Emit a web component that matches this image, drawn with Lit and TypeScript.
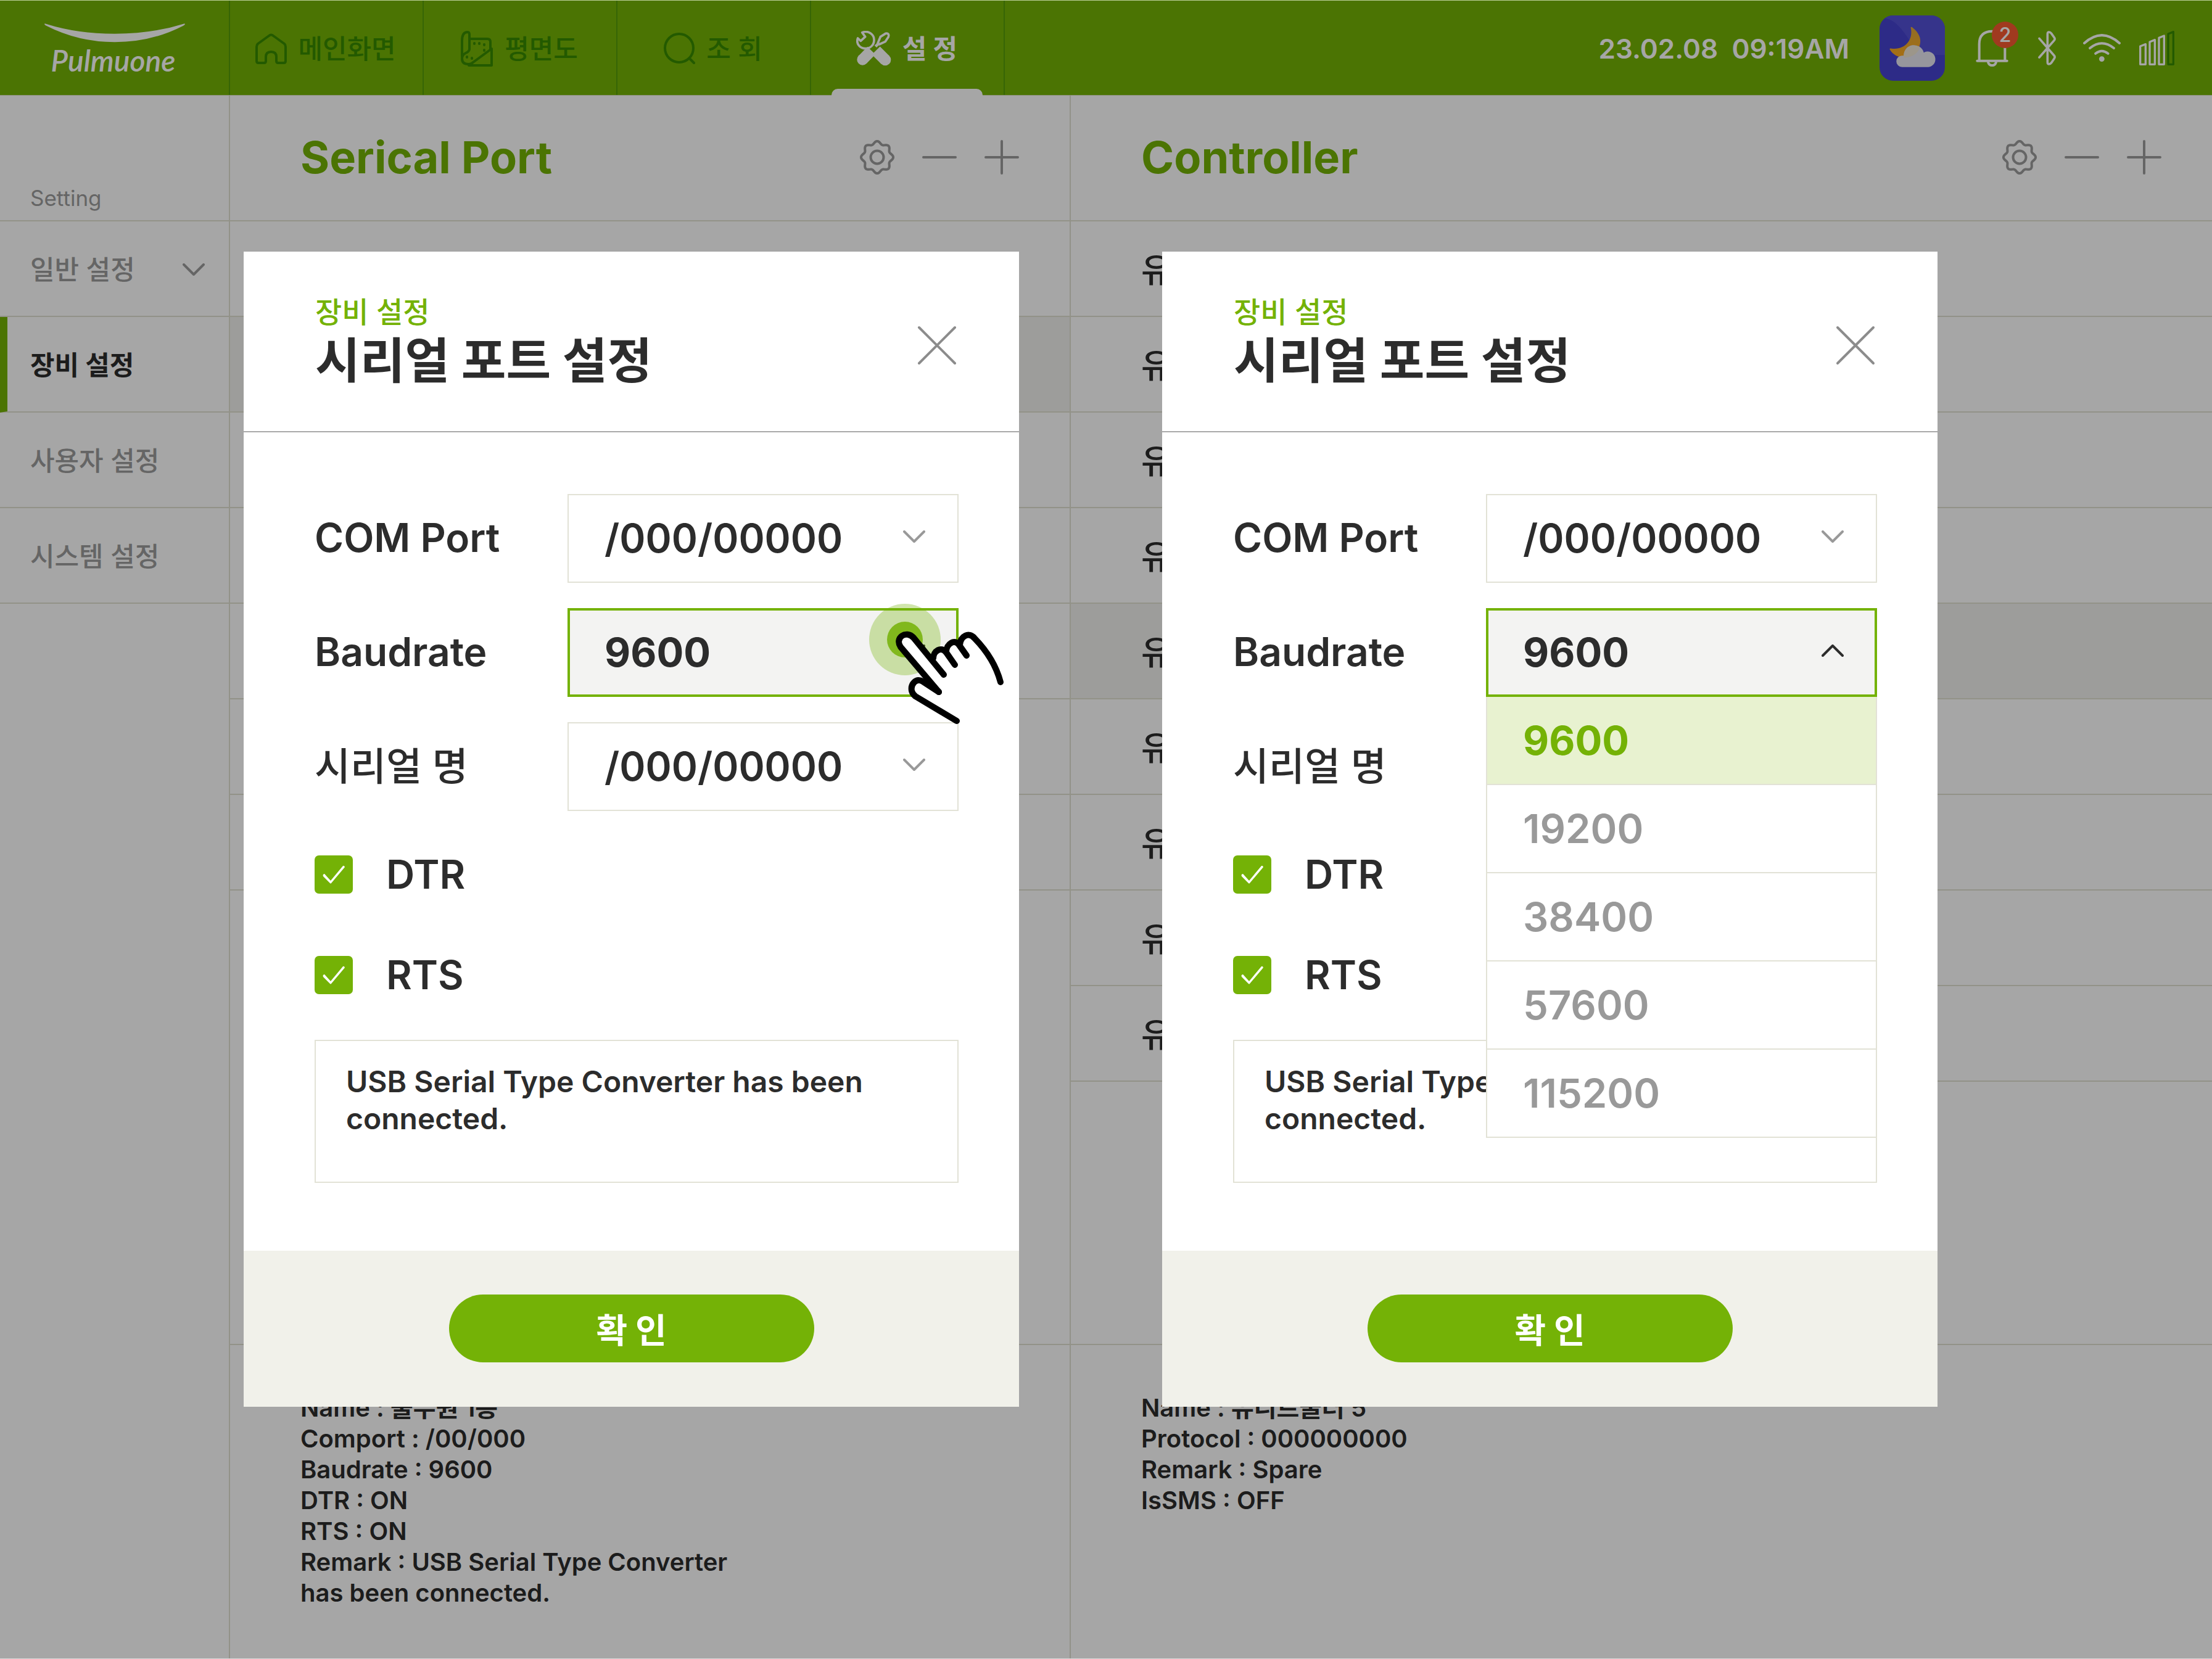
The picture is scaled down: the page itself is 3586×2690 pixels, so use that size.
import { LitElement, html, svg, css } from "lit";
import { customElement, property } from "lit/decorators.js";
import { classMap } from "lit/directives/class-map.js";

/* ---------- icons ---------- */

const homeIcon = html`<svg class="icon" width="51" height="50" viewBox="0 0 51 50" fill="none" stroke="currentColor" stroke-width="4" stroke-linejoin="round" aria-hidden="true">
  <path d="M5 48 Q2 48 2 45 V22 Q2 19 4 17 L22 4 Q25.500 1 29 4 L47 17 Q49 19 49 22 V45 Q49 48 46 48 H37 Q34 48 34 45 V38 Q34 30 25.500 30 Q17 30 17 38 V45 Q17 48 14 48 Z"/>
</svg>`;

const planIcon = html`<svg class="icon" width="53" height="58" viewBox="0 0 53 58" fill="none" stroke="currentColor" stroke-width="4" stroke-linejoin="round" stroke-linecap="round" aria-hidden="true">
  <path d="M2 42 V16 Q2 2 11 2 Q14 2 14 6 V30 Q13 34 8 36 Q2 39 2 45 Q2 54 12 54 Q17 54 20 51 L50 29 V56 H13"/>
  <path d="M14 13 H43 Q48 13 48 18 V29"/>
  <path d="M22 20v1M30 20v1M38 22v1M38 31v1M10 42v1M18 44v1"/>
</svg>`;

const searchIcon = html`<svg class="icon" width="51" height="51" viewBox="0 0 51 51" fill="none" stroke="currentColor" stroke-width="4" stroke-linecap="round" aria-hidden="true">
  <circle cx="25" cy="25" r="23"/><path d="M42 42 L49 49"/>
</svg>`;

const toolsIcon = html`<svg class="icon" width="57" height="57" viewBox="0 0 171 171" fill="none" stroke="currentColor" stroke-width="11" stroke-linejoin="round" aria-hidden="true">
  <path d="M29 8 C60 -4 88 18 87 46 C86 70 68 86 46 86 C18 86 -2 62 8 36 L22 49 L44 29 Z"/>
  <path d="M105 60 L118 29 L143 13 Q152 10 157 17 Q160 22 157 29 L142 52 L112 66 Z"/>
  <path d="M112 58 L94 76" stroke-width="14"/>
  <path d="M31 140 L74 96" stroke-width="54"/><circle cx="31" cy="140" r="27" fill="currentColor" stroke="none"/>
  <path d="M141 141 L96 96" stroke-width="56"/><circle cx="141" cy="141" r="28" fill="currentColor" stroke="none"/>
  <path d="M85 73 L97 85 L85 97 L73 85 Z" class="knock" stroke="none"/>
</svg>`;

const gearOutline = (() => {
  const points: string[] = [];
  for (let i = 0; i < 96; i++) {
    const a = (i / 96) * Math.PI * 2;
    const r = 23.8 + 2.3 * Math.cos(8 * a);
    points.push(`${(28 + r * Math.sin(a)).toFixed(2)} ${(28 - r * Math.cos(a)).toFixed(2)}`);
  }
  return `M${points.join("L")}Z`;
})();

const gearIcon = html`<svg class="icon" width="56" height="56" viewBox="0 0 56 56" fill="none" stroke="currentColor" stroke-width="4" stroke-linejoin="round" aria-hidden="true">
  <path d=${gearOutline}/><circle cx="28" cy="28" r="10.500"/>
</svg>`;
const minusIcon = html`<svg class="icon" width="56" height="56" viewBox="0 0 56 56" stroke="currentColor" stroke-width="4" stroke-linecap="round" aria-hidden="true"><path d="M2 28H54"/></svg>`;
const plusIcon = html`<svg class="icon" width="56" height="56" viewBox="0 0 56 56" stroke="currentColor" stroke-width="4" stroke-linecap="round" aria-hidden="true"><path d="M2 28H54M28 2V54"/></svg>`;
const closeIcon = html`<svg class="icon" width="64" height="64" viewBox="0 0 64 64" stroke="currentColor" stroke-width="4" stroke-linecap="round" aria-hidden="true"><path d="M3 3L61 61M61 3L3 61"/></svg>`;

const chevron = (up = false) => html`<svg class="chevron" width="36" height="20" viewBox="0 0 36 20" fill="none" stroke="currentColor" stroke-width="4" stroke-linecap="round" stroke-linejoin="round" aria-hidden="true">
  ${up ? svg`<path d="M2 18L18 2L34 18"/>` : svg`<path d="M2 2L18 18L34 2"/>`}
</svg>`;

const weatherIcon = html`<svg class="icon" width="106" height="106" viewBox="0 0 319 319" role="img" aria-label="Partly cloudy night">
  <defs>
    <clipPath id="tile"><rect width="319" height="319" rx="66"/></clipPath>
    <linearGradient id="moon" x1="0" y1="0" x2="0" y2="1"><stop offset="0" stop-color="#e0a83a"/><stop offset="1" stop-color="#ffab1c"/></linearGradient>
  </defs>
  <g clip-path="url(#tile)">
    <rect width="319" height="319" fill="#4542cf"/>
    <path d="M20 12 C80 20 110 70 150 125 C190 180 250 200 319 192 V0 H0 Z" fill="#5451d6"/>
    <path d="M152 58 Q157 54 162 60 C196 86 210 124 190 160 C160 214 84 222 50 166 Q48 160 55 161 C118 172 168 124 152 58 Z" fill="url(#moon)"/>
    <path d="M110 252 A28 28 0 0 1 110 196 L118 196 A50 50 0 0 1 216 181 A38 38 0 1 1 238 252 Z" fill="#e6e6f2"/>
    <path d="M118 196 C120 160 160 138 196 153 C192 184 158 206 118 206 Z" fill="#f2e6cc" opacity=".8"/>
  </g>
</svg>`;

const bellIcon = html`<svg class="icon" width="53" height="60" viewBox="0 0 159 180" fill="none" stroke="currentColor" stroke-width="12" stroke-linecap="round" aria-hidden="true">
  <path d="M17 150 V70 Q17 8 80 8 Q142 8 142 70 V150"/><path d="M7 152 H152"/><path d="M60 158 Q64 174 80 174 Q95 174 99 158"/>
</svg>`;
const bluetoothIcon = html`<svg class="icon" width="29" height="56" viewBox="0 0 87 168" fill="none" stroke="currentColor" stroke-width="11" stroke-linecap="round" stroke-linejoin="round" aria-hidden="true">
  <path d="M6 37 L78 120 Q84 127 79 134 L65 155 Q59 163 52 162 Q46 161 46 152 V16 Q46 7 52 6 Q59 5 65 13 L79 33 Q84 40 78 47 L6 129"/>
</svg>`;
const wifiIcon = html`<svg class="icon" width="61" height="45" viewBox="0 0 181 133" fill="none" stroke="currentColor" stroke-width="12" stroke-linecap="round" aria-hidden="true">
  <path d="M6 44 Q90 -32 175 44M33 68 Q90 22 148 68M60 94 Q90 70 120 94"/><circle cx="90" cy="120" r="13" fill="currentColor" stroke="none"/>
</svg>`;
const signalIcon = html`<svg class="icon" width="57" height="56" viewBox="0 0 171 168" fill="none" stroke="currentColor" stroke-width="10" stroke-linejoin="round" aria-hidden="true">
  <path d="M5 75 L31 65 V163 H5 Z M51 54 L76 44 V163 H51 Z M96 34 L121 24 V163 H96 Z"/>
  <path class="weak" d="M141 15 L166 5 V163 H141 Z"/>
</svg>`;

/* Pointing hand with the touch ripple under its fingertip. */
const touchHand = html`<svg class="touch" width="240" height="210" viewBox="1400 970 240 210" aria-hidden="true">
  <circle cx="1467" cy="1037" r="58" fill="#74b206" opacity=".33"/>
  <circle cx="1467" cy="1037" r="29" fill="#74b206" opacity=".85"/>
  <path fill="#fff" d="M1522 1122 L1460 1049 C1450 1034 1469 1021 1481 1034 L1513 1067 C1513 1056 1524 1049 1533 1058 C1534 1044 1546 1036 1555 1046 C1557 1032 1570 1024 1580 1035 Q1612 1068 1622 1106 L1551 1169 L1484 1129 C1474 1122 1477 1104 1488 1103 Z"/>
  <g fill="none" stroke="#000" stroke-width="10" stroke-linecap="round" stroke-linejoin="round">
    <path d="M1522 1122 L1460 1049 C1450 1034 1469 1021 1481 1034 L1530 1094"/>
    <path d="M1513 1067 C1513 1056 1526 1047 1534 1058 L1548 1078"/>
    <path d="M1534 1057 C1534 1044 1548 1035 1555 1046 L1567 1063"/>
    <path d="M1556 1046 C1557 1031 1571 1024 1580 1035 Q1612 1068 1622 1106"/>
    <path d="M1522 1122 L1496 1105 C1485 1098 1476 1110 1478 1120 Q1479 1125 1484 1129 L1551 1169"/>
  </g>
</svg>`;

/* ---------- serial port dialog ---------- */

@customElement("port-dialog")
class PortDialog extends LitElement {
  @property({ type: Boolean }) open = false;
  @property({ type: Boolean }) touched = false;

  static styles = css`
    :host { display: block; background: #fff; color: #2c2c2c; }
    * { box-sizing: border-box; margin: 0; }
    .icon, .chevron { display: block; flex: none; }
    .head { display: flex; align-items: center; justify-content: space-between; height: 293px; padding: 0 101px 0 116px; border-bottom: 2px solid #a9a9a9; }
    .kicker { font-size: 47px; line-height: 62px; font-weight: 500; color: #74b206; }
    .title { font-size: 79px; line-height: 96px; font-weight: 700; }
    .close { margin-top: 12px; padding: 0; border: 0; background: none; color: #8c8c8c; cursor: pointer; }
    .body { padding: 100px 98px 110px 115px; }
    .fields { display: grid; gap: 41px; }
    .field { display: grid; grid-template-columns: 410px 1fr; align-items: center; }
    .label { padding-bottom: 2px; font-size: 64px; line-height: 80px; font-weight: 600; }
    .label.hangul { font-size: 63px; font-weight: 500; }
    .control { position: relative; display: flex; align-items: center; justify-content: flex-end; }
    select { appearance: none; width: 100%; height: 144px; padding: 0 120px 0 58px; border: 2px solid #e2e2d6; border-radius: 0; background: #fff; color: inherit; font: 600 64px/80px "Inter", "Noto Sans CJK KR", sans-serif; outline: none; }
    .active select { padding-left: 56px; border: 4px solid #74b206; background: #f3f3f2; font-size: 65px; font-weight: 700; }
    .control > .chevron { position: absolute; right: 54px; margin-bottom: 6px; color: #999; pointer-events: none; }
    .active > .chevron { color: #2c2c2c; }
    .touch { position: absolute; top: -16px; right: -86px; z-index: 2; }
    .menu { position: absolute; top: 100%; left: 0; right: 0; z-index: 1; padding: 0; list-style: none; background: #fff; }
    .option { height: 143px; padding: 0 58px; border: 2px solid #e2e2d6; border-top: 0; font-size: 65px; line-height: 142px; font-weight: 600; color: #999; }
    .option.chosen { background: #e8f2d0; color: #74b206; font-weight: 700; }
    .checks { display: grid; gap: 101px; margin: 72px 0 74px; }
    .check { display: flex; align-items: center; gap: 54px; height: 62px; }
    .check input { appearance: none; width: 62px; height: 62px; margin: 0; border-radius: 7px; background: #fff; border: 2px solid #e2e2d6; display: grid; place-items: center; }
    .check input:checked { background: #74b206; border: 0; }
    .check input:checked::before { content: ""; width: 36px; height: 30px; background: #fff; clip-path: path("M1 15 Q3 13 4 15 L13 25 L33 1 Q35 0 36 3 L14 29 Q13 30 12 29 L1 18 Q0 16 1 15 Z"); }
    .check label { font-size: 64px; line-height: 80px; font-weight: 600; }
    .note { display: block; width: 100%; height: 232px; padding: 36px 49px; border: 2px solid #e2e2d6; border-radius: 0; background: #fff; color: inherit; font: 600 48px/60px "Inter", sans-serif; resize: none; outline: none; }
    .foot { display: flex; justify-content: center; padding: 71px 0 72px; background: #f1f1ea; }
    .ok { width: 592px; height: 110px; padding: 6px 0 0; border: 0; border-radius: 55px; background: #74b206; color: #fff; font: 700 55px/72px "Inter", "Noto Sans CJK KR", sans-serif; cursor: pointer; }
  `;

  private rates = ["9600", "19200", "38400", "57600", "115200"];

  private selectField(id: string, label: string, value: string, active = false) {
    const hangul = /[가-힣]/.test(label);
    return html`<div class="field">
      <label class=${classMap({ label: true, hangul })} for=${id}>${label}</label>
      <div class=${classMap({ control: true, active })}>
        <select id=${id}><option>${value}</option></select>
        ${chevron(active && this.open)}
        ${active && this.touched ? touchHand : null}
        ${active && this.open
          ? html`<ul class="menu" role="listbox" aria-label=${label}>
              ${this.rates.map((rate) => html`<li role="option" aria-selected=${rate === value} class=${classMap({ option: true, chosen: rate === value })}>${rate}</li>`)}
            </ul>`
          : null}
      </div>
    </div>`;
  }

  render() {
    return html`
      <header class="head">
        <div>
          <p class="kicker">장비 설정</p>
          <h2 class="title">시리얼 포트 설정</h2>
        </div>
        <button class="close" aria-label="Close">${closeIcon}</button>
      </header>
      <div class="body">
        <div class="fields">
          ${this.selectField("com", "COM Port", "/000/00000")}
          ${this.selectField("baud", "Baudrate", "9600", true)}
          ${this.selectField("serial", "시리얼 명", "/000/00000")}
        </div>
        <div class="checks">
          <div class="check"><input id="dtr" type="checkbox" checked /><label for="dtr">DTR</label></div>
          <div class="check"><input id="rts" type="checkbox" checked /><label for="rts">RTS</label></div>
        </div>
        <textarea class="note" aria-label="Remark" .value=${"USB Serial Type Converter has been connected."}></textarea>
      </div>
      <footer class="foot"><button class="ok">확 인</button></footer>
    `;
  }
}

/* ---------- page ---------- */

interface Panel {
  title: string;
  rows: string[];
  selected: number;
  details: string[];
}

@customElement("app-root")
class AppRoot extends LitElement {
  static styles = css`
    :host { display: block; font-family: "Inter", "Noto Sans CJK KR", sans-serif; color: #2c2c2c; }
    * { box-sizing: border-box; margin: 0; }
    .icon, .chevron { display: block; flex: none; }
    .page { position: relative; display: flex; flex-direction: column; min-height: 100vh; border-top: 1px solid #bccf98; border-bottom: 1px solid #d8d8d8; background: #fff; }
    .top { display: flex; align-items: stretch; height: 154px; border-bottom: 1px solid #d5dfb9; background: #74b206; color: #fff; }
    .brand { display: flex; flex-direction: column; align-items: center; gap: 3px; width: 373px; padding-top: 37px; border-right: 2px solid #549b08; }
    .wordmark { font-family: "Lato", sans-serif; font-style: italic; font-weight: 600; font-size: 48px; line-height: 52px; padding-right: 4px; }
    .nav { display: flex; }
    .tab { position: relative; display: flex; align-items: center; justify-content: center; gap: 18px; width: 314px; padding: 2px 2px 0 0; border-right: 2px solid #549b08; color: #378a00; font-size: 43px; line-height: 60px; font-weight: 500; text-decoration: none; }
    .tab.current { color: #fff; font-weight: 700; }
    .tab.current::after { content: ""; position: absolute; left: 33px; right: 34px; bottom: -1px; height: 11px; border-radius: 10px 10px 0 0; background: #fff; }
    .knock { fill: #74b206; }
    .status { display: flex; align-items: center; margin-left: auto; padding-right: 61px; }
    .clock { margin-right: 49px; padding-top: 2px; font-size: 44px; line-height: 60px; font-weight: 600; white-space: pre; }
    .bell { position: relative; margin: 0 48px 0 50px; }
    .badge { position: absolute; top: -13px; right: -16px; width: 43px; height: 43px; border-radius: 50%; background: #f65930; font-size: 32px; line-height: 43px; font-weight: 500; text-align: center; }
    .wifi { margin: 0 30px 0 44px; }
    .weak { stroke: #378a00; }

    .main { flex: 1; display: grid; grid-template-columns: 373px 1363fr 1850fr; }
    .side { border-right: 2px solid #e0e0d2; }
    .side-head { display: flex; align-items: flex-end; height: 204px; padding: 0 0 14px 49px; border-bottom: 2px solid #e0e0d2; color: #9b9b9b; font-size: 35px; line-height: 44px; }
    .side-item { display: flex; align-items: center; justify-content: space-between; height: 155px; padding: 3px 39px 0 49px; border-bottom: 2px solid #e0e0d2; color: #9b9b9b; font-size: 43px; line-height: 60px; font-weight: 500; text-decoration: none; }
    .side-item.current { padding-left: 37px; border-left: 12px solid #74b206; color: #2c2c2c; font-weight: 700; }
    .panel { display: flex; flex-direction: column; }
    .panel:not(:last-child) { border-right: 2px solid #e0e0d2; }
    .panel-head { display: flex; align-items: center; justify-content: space-between; height: 204px; padding: 0 82px 2px 114px; border-bottom: 2px solid #e0e0d2; }
    .panel-title { font-size: 72px; line-height: 90px; font-weight: 700; color: #74b206; }
    .actions { display: flex; gap: 45px; }
    .action { padding: 0; border: 0; background: none; color: #9b9b9b; cursor: pointer; }
    .list { flex: 1; padding: 0; list-style: none; }
    .row { height: 155px; padding: 3px 114px 0; border-bottom: 2px solid #e0e0d2; font-size: 54px; line-height: 153px; font-weight: 500; }
    .row.selected { background: #f1f1ef; }
    .details { min-height: 510px; padding: 77px 114px 80px; border-top: 2px solid #e0e0d2; font-size: 40px; line-height: 50px; font-weight: 600; }
    .details p { max-width: 720px; }

    .scrim { position: absolute; inset: 0; display: flex; align-items: flex-start; gap: 232px; padding: 407px 445px 0 395px; background: rgba(0, 0, 0, 0.35); }
    .scrim > port-dialog { flex: 1; min-width: 0; }
  `;

  private tabs = [
    { label: "메인화면", icon: homeIcon },
    { label: "평면도", icon: planIcon },
    { label: "조 회", icon: searchIcon },
    { label: "설 정", icon: toolsIcon, current: true },
  ];

  private menu = ["일반 설정", "장비 설정", "사용자 설정", "시스템 설정"];

  private panels: Panel[] = [
    {
      title: "Serical Port",
      rows: ["", "", "", "", "", "", ""],
      selected: 1,
      details: ["Name : 풀무원 1층", "Comport : /00/000", "Baudrate : 9600", "DTR : ON", "RTS : ON", "Remark : USB Serial Type Converter has been connected."],
    },
    {
      title: "Controller",
      rows: [1, 2, 3, 4, 5, 6, 7, 8, 9].map((n) => `유니트쿨러 ${n}`),
      selected: 4,
      details: ["Name : 유니트쿨러 5", "Protocol : 000000000", "Remark : Spare", "IsSMS : OFF"],
    },
  ];

  private panel(panel: Panel) {
    return html`<section class="panel">
      <header class="panel-head">
        <h1 class="panel-title">${panel.title}</h1>
        <div class="actions">
          <button class="action" aria-label="Settings">${gearIcon}</button>
          <button class="action" aria-label="Remove">${minusIcon}</button>
          <button class="action" aria-label="Add">${plusIcon}</button>
        </div>
      </header>
      <ul class="list">
        ${panel.rows.map((row, i) => html`<li class=${classMap({ row: true, selected: i === panel.selected })}>${row}</li>`)}
      </ul>
      <div class="details">${panel.details.map((line) => html`<p>${line}</p>`)}</div>
    </section>`;
  }

  render() {
    return html`<div class="page">
      <header class="top">
        <div class="brand">
          <svg class="icon" width="228" height="31" viewBox="0 0 684 93" fill="currentColor" aria-hidden="true">
            <path d="M0 2 Q2 -1 8 2 Q160 50 342 50 Q524 50 676 2 Q682 -1 684 4 Q683 8 674 12 Q520 91 342 91 Q164 91 6 10 Q0 6 0 2 Z"/>
          </svg>
          <span class="wordmark">Pulmuone</span>
        </div>
        <nav class="nav">
          ${this.tabs.map((tab) => html`<a href="#" class=${classMap({ tab: true, current: !!tab.current })}>${tab.icon}<span>${tab.label}</span></a>`)}
        </nav>
        <div class="status">
          <time class="clock">23.02.08  09:19AM</time>
          ${weatherIcon}
          <div class="bell">${bellIcon}<span class="badge">2</span></div>
          ${bluetoothIcon}
          <div class="wifi">${wifiIcon}</div>
          ${signalIcon}
        </div>
      </header>
      <main class="main">
        <nav class="side">
          <p class="side-head">Setting</p>
          ${this.menu.map((item, i) => html`<a href="#" class=${classMap({ "side-item": true, current: i === 1 })}>${item}${i === 0 ? chevron() : null}</a>`)}
        </nav>
        ${this.panels.map((panel) => this.panel(panel))}
      </main>
      <div class="scrim">
        <port-dialog role="dialog" aria-label="시리얼 포트 설정" touched></port-dialog>
        <port-dialog role="dialog" aria-label="시리얼 포트 설정" open></port-dialog>
      </div>
    </div>`;
  }
}
